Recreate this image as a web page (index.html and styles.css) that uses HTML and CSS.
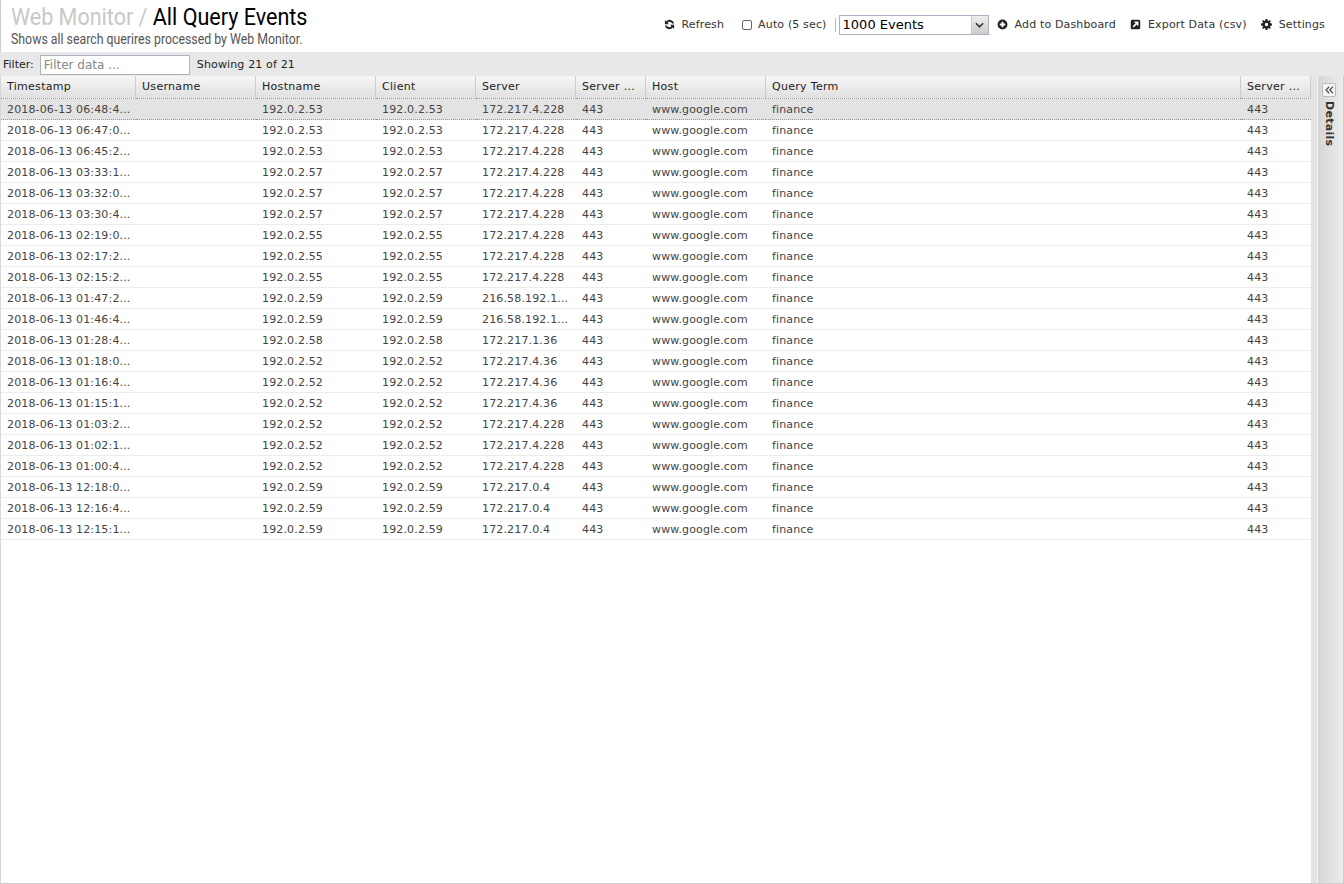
FILE: index.html
```html
<!DOCTYPE html>
<html lang="en">
<head>
    <meta charset="UTF-8">
    <title>All Query Events</title>
    <link rel="stylesheet" href="styles.css">
</head>
<body>
    <div class="page-header">
        <div class="title-block">
            <h1 class="page-title"><span class="app-name">Web Monitor /</span> All Query Events</h1>
            <div class="page-subtitle">Shows all search querires processed by Web Monitor.</div>
        </div>
        <div class="toolbar">
            <span class="tool">
                <svg class="tool-icon" viewBox="0 0 12 12"><path d="M11 5A5 5 0 0 0 2.4 2.6L1 1.2V5.6H5.4L3.9 4.1A3 3 0 0 1 8.9 5ZM1 7A5 5 0 0 0 9.6 9.4L11 10.8V6.4H6.6L8.1 7.9A3 3 0 0 1 3.1 7Z"/></svg>
                Refresh
            </span>
            <label class="tool auto-tool"><span class="check"></span>Auto (5 sec)</label>
            <span class="tool-sep"></span>
            <span class="event-select">
                <span class="event-value">1000 Events</span>
                <span class="event-arrow"><svg viewBox="0 0 10 6"><path d="M1 1L5 5L9 1" fill="none" stroke="#333" stroke-width="1.8"/></svg></span>
            </span>
            <span class="tool">
                <svg class="tool-icon" viewBox="0 0 12 12"><path fill-rule="evenodd" d="M6 .6a5.4 5.4 0 1 0 0 10.8A5.4 5.4 0 0 0 6 .6ZM5 3H7V5H9V7H7V9H5V7H3V5H5Z"/></svg>
                Add to Dashboard
            </span>
            <span class="tool">
                <svg class="tool-icon" viewBox="0 0 12 12"><path fill-rule="evenodd" d="M2.5 .8H9.5A1.7 1.7 0 0 1 11.2 2.5V9.5A1.7 1.7 0 0 1 9.5 11.2H2.5A1.7 1.7 0 0 1 .8 9.5V2.5A1.7 1.7 0 0 1 2.5 .8ZM5 2.8V4.4H6.4L2.8 8L4 9.2L7.6 5.6V7H9.2V2.8Z"/></svg>
                Export Data (csv)
            </span>
            <span class="tool">
                <svg class="tool-icon" viewBox="0 0 12 12"><path fill-rule="evenodd" d="M5 0H7L7.3 1.7L8.4 2.2L9.8 1.2L10.8 2.2L9.8 3.6L10.3 4.7L12 5V7L10.3 7.3L9.8 8.4L10.8 9.8L9.8 10.8L8.4 9.8L7.3 10.3L7 12H5L4.7 10.3L3.6 9.8L2.2 10.8L1.2 9.8L2.2 8.4L1.7 7.3L0 7V5L1.7 4.7L2.2 3.6L1.2 2.2L2.2 1.2L3.6 2.2L4.7 1.7ZM6 4.2A1.8 1.8 0 1 0 6 7.8A1.8 1.8 0 0 0 6 4.2Z"/></svg>
                Settings
            </span>
        </div>
    </div>

    <div class="main">
        <div class="content">
            <div class="filter-bar">
                <span class="filter-label">Filter:</span>
                <input class="filter-input" type="text" placeholder="Filter data ...">
                <span class="filter-count">Showing 21 of 21</span>
            </div>
            <div class="grid-wrap">
                <table class="grid">
                    <colgroup>
                        <col class="w135"><col class="w120"><col class="w120"><col class="w100"><col class="w100"><col class="w70"><col class="w120"><col><col class="w70">
                    </colgroup>
                    <thead>
                        <tr><th>Timestamp</th><th>Username</th><th>Hostname</th><th>Client</th><th>Server</th><th>Server ...</th><th>Host</th><th>Query Term</th><th>Server ...</th></tr>
                    </thead>
                    <tbody id="rows"></tbody>
                </table>
            </div>
        </div>
        <div class="details-panel">
            <span class="collapse-btn"><svg viewBox="0 0 9 8"><path d="M4.2 .8L1 4L4.2 7.2M8 .8L4.8 4L8 7.2" fill="none" stroke="#555" stroke-width="1.3"/></svg></span>
            <span class="details-label">Details</span>
        </div>
    </div>
    <script src="rows.js"></script>
</body>
</html>
```

FILE: rows.js
```js
// timestamp, client, server
const events = [
    ['2018-06-13 06:48:4...', '192.0.2.53', '172.217.4.228'],
    ['2018-06-13 06:47:0...', '192.0.2.53', '172.217.4.228'],
    ['2018-06-13 06:45:2...', '192.0.2.53', '172.217.4.228'],
    ['2018-06-13 03:33:1...', '192.0.2.57', '172.217.4.228'],
    ['2018-06-13 03:32:0...', '192.0.2.57', '172.217.4.228'],
    ['2018-06-13 03:30:4...', '192.0.2.57', '172.217.4.228'],
    ['2018-06-13 02:19:0...', '192.0.2.55', '172.217.4.228'],
    ['2018-06-13 02:17:2...', '192.0.2.55', '172.217.4.228'],
    ['2018-06-13 02:15:2...', '192.0.2.55', '172.217.4.228'],
    ['2018-06-13 01:47:2...', '192.0.2.59', '216.58.192.1...'],
    ['2018-06-13 01:46:4...', '192.0.2.59', '216.58.192.1...'],
    ['2018-06-13 01:28:4...', '192.0.2.58', '172.217.1.36'],
    ['2018-06-13 01:18:0...', '192.0.2.52', '172.217.4.36'],
    ['2018-06-13 01:16:4...', '192.0.2.52', '172.217.4.36'],
    ['2018-06-13 01:15:1...', '192.0.2.52', '172.217.4.36'],
    ['2018-06-13 01:03:2...', '192.0.2.52', '172.217.4.228'],
    ['2018-06-13 01:02:1...', '192.0.2.52', '172.217.4.228'],
    ['2018-06-13 01:00:4...', '192.0.2.52', '172.217.4.228'],
    ['2018-06-13 12:18:0...', '192.0.2.59', '172.217.0.4'],
    ['2018-06-13 12:16:4...', '192.0.2.59', '172.217.0.4'],
    ['2018-06-13 12:15:1...', '192.0.2.59', '172.217.0.4']
];

const rowsElement = document.getElementById('rows');

events.forEach((ev, i) => {
    const row = document.createElement('tr');
    if (i === 0) row.className = 'selected';
    const cells = [ev[0], '', ev[1], ev[1], ev[2], '443', 'www.google.com', 'finance', '443'];
    cells.forEach(text => {
        const cell = document.createElement('td');
        cell.textContent = text;
        row.appendChild(cell);
    });
    rowsElement.appendChild(row);
});
```

FILE: styles.css
```css
html, body {
    height: 100%;
}
body {
    margin: 0;
    font-family: "DejaVu Sans", sans-serif;
    font-size: 11px;
    color: #333;
    background-color: #fff;
    display: flex;
    flex-direction: column;
    overflow: hidden;
}
.page-header {
    height: 52px;
    flex: none;
    display: flex;
    justify-content: space-between;
    border-left: 1px solid #ccc;
    box-sizing: border-box;
}
.title-block {
    padding: 3px 0 0 10px;
}
.page-title {
    margin: 0;
    font-family: Roboto, sans-serif;
    font-size: 24px;
    line-height: 28px;
    font-weight: 400;
    color: #000;
    white-space: nowrap;
    transform: scaleX(0.897);
    transform-origin: left center;
}
.app-name {
    color: #c8c8c8;
}
.page-subtitle {
    font-family: Roboto, sans-serif;
    font-size: 14px;
    line-height: 16px;
    color: #555;
    white-space: nowrap;
    transform: scaleX(0.88);
    transform-origin: left center;
}
.toolbar {
    display: flex;
    align-items: center;
    height: 49px;
    padding-right: 19px;
    color: #333;
    letter-spacing: 0.15px;
}
.tool {
    display: flex;
    align-items: center;
    gap: 7px;
    margin-left: 14px;
    white-space: nowrap;
}
.tool-icon {
    width: 11px;
    height: 11px;
    fill: #222;
}
.auto-tool {
    gap: 6px;
    margin-left: 18px;
}
.check {
    width: 8px;
    height: 8px;
    border: 1px solid #666;
    border-radius: 2px;
    background-color: #fff;
}
.tool-sep {
    width: 1px;
    height: 14px;
    background-color: #bbb;
    margin: 0 3px 0 8px;
}
.event-select {
    width: 150px;
    height: 20px;
    box-sizing: border-box;
    display: flex;
    justify-content: space-between;
    border: 1px solid #abb2c4;
    color: #000;
    font-size: 13px;
    letter-spacing: 0;
}
.event-select + .tool {
    margin-left: 8px;
}
.event-value {
    line-height: 18px;
    padding-left: 3px;
}
.event-arrow {
    width: 16px;
    display: flex;
    align-items: center;
    justify-content: center;
    border-left: 1px solid #ccc;
    background: linear-gradient(#eee, #ccc);
}
.event-arrow svg {
    width: 9px;
    height: 6px;
}
.main {
    flex: 1;
    display: flex;
    min-height: 0;
    border-bottom: 1px solid #ccc;
    background-color: #e8e8e8;
}
.content {
    flex: 1;
    display: flex;
    flex-direction: column;
    min-width: 0;
}
.filter-bar {
    height: 23px;
    margin-top: 1px;
    flex: none;
    display: flex;
    align-items: center;
    padding-left: 3px;
    color: #222;
}
.filter-label {
    font-size: 11px;
}
.filter-input {
    width: 150px;
    height: 20px;
    box-sizing: border-box;
    margin: 0 7px 0 6px;
    padding: 0 3px;
    border: 1px solid #abb2c4;
    border-radius: 0;
    outline: none;
    font-family: "DejaVu Sans", sans-serif;
    font-size: 12px;
}
.filter-input::placeholder {
    color: #888;
}
.filter-count {
    letter-spacing: 0.15px;
}
.grid-wrap {
    flex: 1;
    background-color: #fff;
    border-left: 1px solid #d8d8d8;
}
.grid {
    width: 1310px;
    table-layout: fixed;
    border-collapse: separate;
    border-spacing: 0;
}
.w135 { width: 135px; }
.w120 { width: 120px; }
.w100 { width: 100px; }
.w70 { width: 70px; }
.grid th {
    height: 23px;
    padding: 0 6px 2px;
    box-sizing: border-box;
    text-align: left;
    font-weight: 400;
    color: #222;
    letter-spacing: 0.3px;
    background: linear-gradient(#f6f6f6, #e0e0e0);
    border-right: 1px solid #ccc;
    border-bottom: 1px dotted #999;
    white-space: nowrap;
    overflow: hidden;
}
.grid td {
    height: 21px;
    padding: 0 6px;
    box-sizing: border-box;
    color: #444;
    letter-spacing: 0.15px;
    border-bottom: 1px solid #ececec;
    white-space: nowrap;
    overflow: hidden;
}
.grid .selected td {
    background-color: #e3e3e3;
    border-bottom: 1px dotted #999;
}
.details-panel {
    width: 33px;
    flex: none;
    box-sizing: border-box;
    margin-top: 24px;
    border-right: 1px solid #ccc;
    background: linear-gradient(90deg, #e4e4e4 6px, #f4f4f4 6px, #f4f4f4 7px, #d6d6d6 7px, #ececec);
    display: flex;
    flex-direction: column;
    align-items: center;
    padding: 7px 0 0 4px;
    gap: 4px;
}
.collapse-btn {
    width: 14px;
    height: 14px;
    box-sizing: border-box;
    display: flex;
    align-items: center;
    justify-content: center;
    border: 1px solid #bbb;
    border-radius: 2px;
    background-color: #f6f6f6;
}
.collapse-btn svg {
    width: 9px;
    height: 8px;
}
.details-label {
    writing-mode: vertical-rl;
    font-weight: 700;
    color: #333;
    letter-spacing: 0.3px;
}
```
